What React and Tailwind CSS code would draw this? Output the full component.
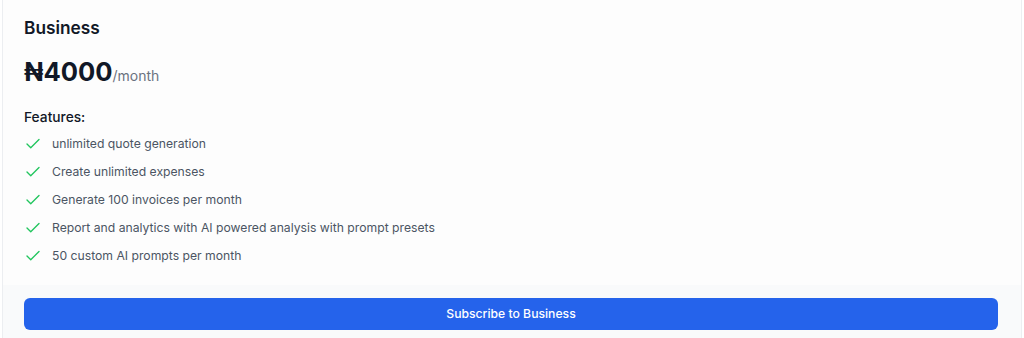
import { Check } from "lucide-react";

const features = [
  "unlimited quote generation",
  "Create unlimited expenses",
  "Generate 100 invoices per month",
  "Report and analytics with AI powered analysis with prompt presets",
  "50 custom AI prompts per month",
];

export default function App() {
  return (
    <div className="min-h-screen bg-white px-[2px] font-['Inter','Noto_Sans',sans-serif]">
      <div className="border border-t-0 border-[#eceef1] bg-[#fdfdfd] overflow-hidden">
        {/* BODY */}
        <div className="pl-[21px] pr-[23px] pt-[14px] pb-[19px]">
          <h3 className="text-[17.3px] leading-7 font-semibold text-[#111827]">Business</h3>
          <div className="mt-3 h-9 flex items-baseline">
            <span className="text-[25.6px] leading-9 font-bold text-[#111827]">₦4000</span>
            <span className="text-sm text-[#6b7280]">/month</span>
          </div>
          <div className="mt-[15px] text-[13.75px] leading-6 font-medium text-[#111827]">Features:</div>
          <ul className="mt-[5px] flex flex-col gap-2">
            {features.map((f) => (
              <li key={f} className="flex items-center gap-[10px] text-[12.2px] leading-5 text-[#4b5563]">
                <Check className="size-[18px] text-[#22c55e] shrink-0" strokeWidth={1.8} />
                <span>{f}</span>
              </li>
            ))}
          </ul>
        </div>

        {/* FOOTER */}
        <div className="bg-[#f9fafb] pl-[21px] pr-[23px] pt-[13px] pb-6">
          <button className="w-full h-8 rounded-md bg-[#2563eb] text-white text-[12.2px] font-medium">
            Subscribe to Business
          </button>
        </div>
      </div>
    </div>
  );
}
